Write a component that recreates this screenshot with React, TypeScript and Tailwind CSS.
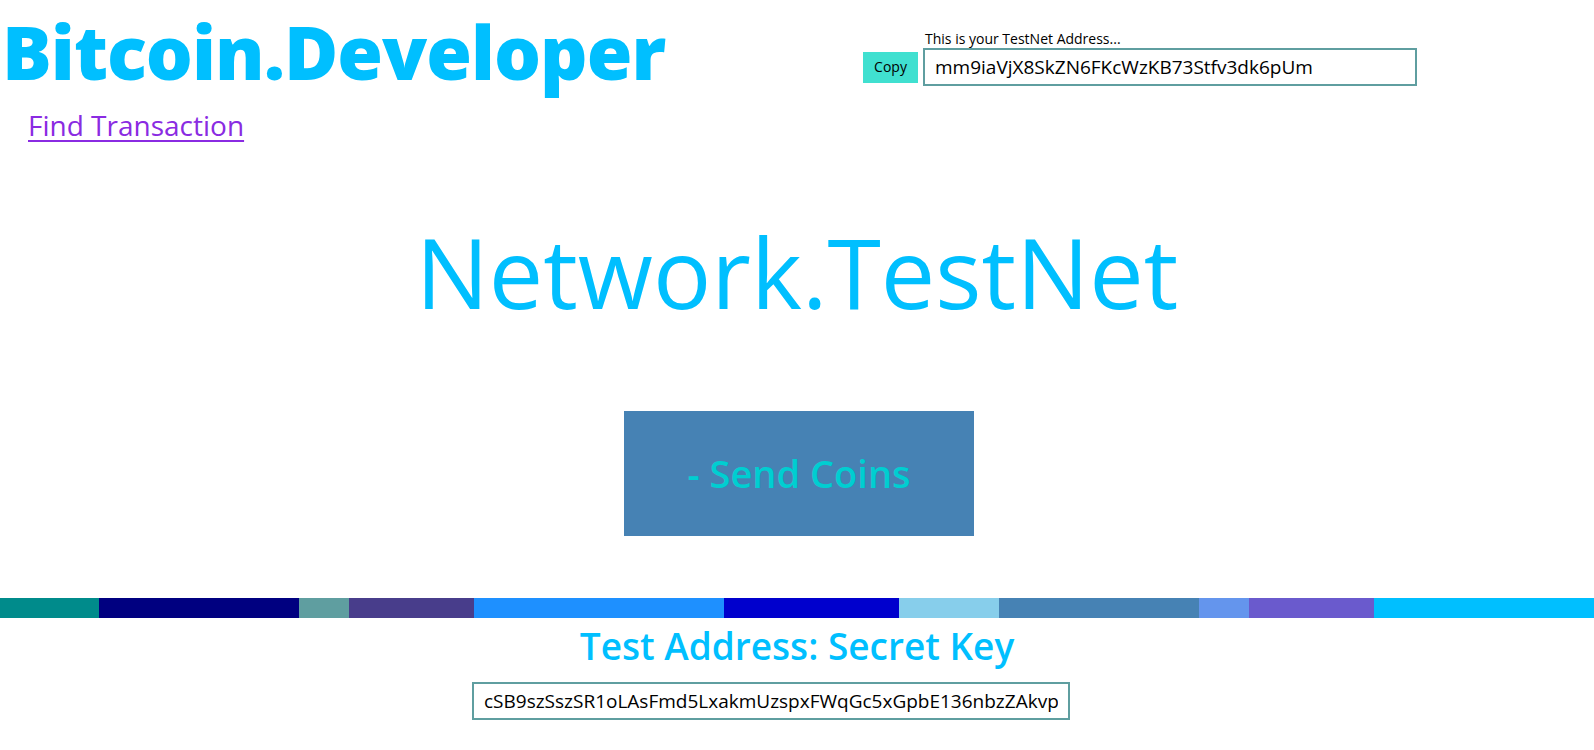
import { useState } from 'react';

const address = 'mm9iaVjX8SkZN6FKcWzKB73Stfv3dk6pUm';
const secretKey = 'cSB9szSszSR1oLAsFmd5LxakmUzspxFWqGc5xGpbE136nbzZAkvp';

/* colour strip under the send button */
const stripes = [
  { color: 'bg-[#008b8b]', width: 'w-[99px]' },
  { color: 'bg-[#000080]', width: 'w-[200px]' },
  { color: 'bg-[#5f9ea0]', width: 'w-[50px]' },
  { color: 'bg-[#483d8b]', width: 'w-[125px]' },
  { color: 'bg-[#1e90ff]', width: 'w-[250px]' },
  { color: 'bg-[#0000cd]', width: 'w-[175px]' },
  { color: 'bg-[#87ceeb]', width: 'w-[100px]' },
  { color: 'bg-[#4682b4]', width: 'w-[200px]' },
  { color: 'bg-[#6495ed]', width: 'w-[50px]' },
  { color: 'bg-[#6a5acd]', width: 'w-[125px]' },
  { color: 'bg-[#00bfff]', width: 'flex-1' },
];

export default function App() {
  const [copied, setCopied] = useState(false);

  return (
    <div className="min-h-[750px] bg-white font-['Open_Sans','Noto_Sans',sans-serif] text-black">
      {/* header */}
      <div className="flex items-start">
        <div className="flex-none">
          <h1 className="pl-[2px] pt-[10px] text-[74px] font-extrabold leading-[84px] tracking-[-1px] text-[#00bfff]">
            Bitcoin.Developer
          </h1>
          <a href="#" className="ml-[28px] mt-[13px] block text-[28px] leading-[36px] text-[#8a2be2] underline underline-offset-4">
            Find Transaction
          </a>
        </div>
        <div className="ml-auto mr-[177px] mt-[30px] flex flex-col">
          <span className="ml-[62px] text-[14px] leading-[18px]">This is your TestNet Address...</span>
          <div className="flex items-center gap-[5px]">
            <button
              onClick={() => setCopied(true)}
              className="h-[31px] w-[55px] bg-[#40e0d0] text-[14px] leading-none"
            >
              {copied ? 'Copied' : 'Copy'}
            </button>
            <input
              readOnly
              value={address}
              className="h-[38px] w-[494px] border-2 border-[#5f9ea0] px-[10px] text-[19px] outline-none"
            />
          </div>
        </div>
      </div>

      {/* network name */}
      <h2 className="mt-[73px] text-center text-[97px] leading-[110px] text-[#00bfff]">
        Network.TestNet
      </h2>

      {/* send button */}
      <div className="mt-[85px] flex justify-center pl-[4px]">
        <button className="h-[125px] w-[350px] bg-[#4682b4] text-[38px] font-semibold text-[#00ced1]">
          - Send Coins
        </button>
      </div>

      {/* stripe */}
      <div className="mt-[62px] flex h-[20px]">
        {stripes.map((s, i) => (
          <div key={i} className={`${s.width} ${s.color}`} />
        ))}
      </div>

      {/* secret key */}
      <h3 className="mt-[2px] text-center text-[37px] font-semibold leading-[52px] text-[#00bfff]">
        Test Address: Secret Key
      </h3>
      <div className="mt-[10px] flex justify-center pr-[52px]">
        <input
          readOnly
          value={secretKey}
          className="h-[38px] w-[598px] border-2 border-[#5f9ea0] px-[10px] text-[19px] outline-none"
        />
      </div>
    </div>
  );
}
